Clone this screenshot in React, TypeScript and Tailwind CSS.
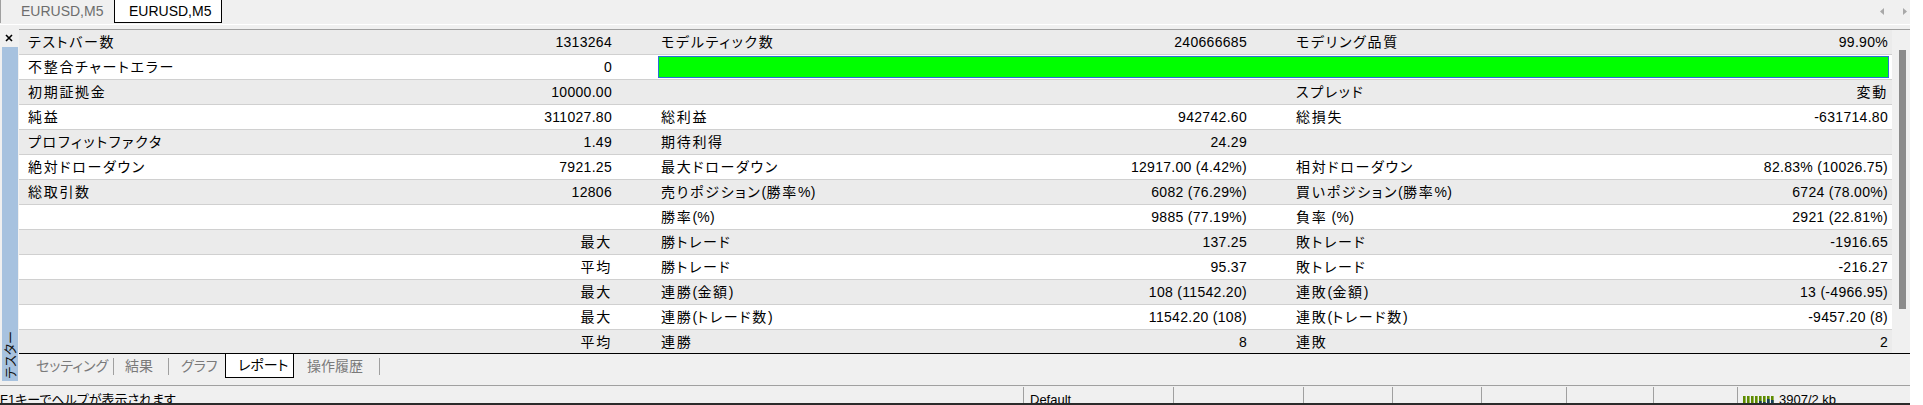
import React from "react";

type Row = { c: [string, string, string, string, string, string]; bar?: boolean };

const data: Row[] = [
  { c: ["テストバー数", "1313264", "モデルティック数", "240666685", "モデリング品質", "99.90%"] },
  { c: ["不整合チャートエラー", "0", "", "", "", ""], bar: true },
  { c: ["初期証拠金", "10000.00", "", "", "スプレッド", "変動"] },
  { c: ["純益", "311027.80", "総利益", "942742.60", "総損失", "-631714.80"] },
  { c: ["プロフィットファクタ", "1.49", "期待利得", "24.29", "", ""] },
  { c: ["絶対ドローダウン", "7921.25", "最大ドローダウン", "12917.00 (4.42%)", "相対ドローダウン", "82.83% (10026.75)"] },
  { c: ["総取引数", "12806", "売りポジション(勝率%)", "6082 (76.29%)", "買いポジション(勝率%)", "6724 (78.00%)"] },
  { c: ["", "", "勝率(%)", "9885 (77.19%)", "負率 (%)", "2921 (22.81%)"] },
  { c: ["", "最大", "勝トレード", "137.25", "敗トレード", "-1916.65"] },
  { c: ["", "平均", "勝トレード", "95.37", "敗トレード", "-216.27"] },
  { c: ["", "最大", "連勝(金額)", "108 (11542.20)", "連敗(金額)", "13 (-4966.95)"] },
  { c: ["", "最大", "連勝(トレード数)", "11542.20 (108)", "連敗(トレード数)", "-9457.20 (8)"] },
  { c: ["", "平均", "連勝", "8", "連敗", "2"] },
];

function T({ s }: { s: string }) {
  const parts = s.split(/([\u3000-\u30ff\u4e00-\u9fff\uff00-\uffef]+)/).filter((p) => p.length > 0);
  return (
    <span>
      {parts.map((p, i) =>
        /[\u3000-\u30ff\u4e00-\u9fff\uff00-\uffef]/.test(p) ? (
          <span key={i} className="tracking-[1.7px]">
            {p}
          </span>
        ) : (
          <span key={i} className="tracking-[0.3px]">
            {p}
          </span>
        )
      )}
    </span>
  );
}

function Sep() {
  return <div className="w-px h-[17px] bg-[#a0a0a0] self-center" />;
}

function StatusSep() {
  return <div className="w-px h-full bg-[#a0a0a0] mt-[1px]" />;
}

export default function App() {
  return (
    <div className="w-[1923px] h-[405px] bg-white overflow-hidden text-[14px] leading-[17px] text-black [font-family:'Liberation_Sans','Noto_Sans_CJK_JP',sans-serif] [font-feature-settings:'palt']">
      <div className="w-[1910px] h-[405px] bg-[#f0f0f0] flex flex-col">
        {/* top tab bar */}
        <div className="h-[24px] flex items-start">
          <div className="h-[23px] w-[114px] border-l border-[#a0a0a0] pl-[20px] flex items-center text-[#6d6d6d]">
            EURUSD,M5
          </div>
          <div className="h-[23px] w-[108px] border-x border-b border-black bg-white pl-[14px] flex items-center">
            EURUSD,M5
          </div>
          <div className="flex-1 h-[22px] flex justify-end items-center gap-[19px] pr-[3px]">
            <svg width="4" height="7" viewBox="0 0 4 7">
              <path d="M4 0 L0 3.5 L4 7 Z" fill="#a8a8a8" />
            </svg>
            <svg width="4" height="7" viewBox="0 0 4 7">
              <path d="M0 0 L4 3.5 L0 7 Z" fill="#a8a8a8" />
            </svg>
          </div>
        </div>
        <div className="h-px bg-white" />
        <div className="h-[4px]" />

        {/* panel */}
        <div className="flex h-[356px]">
          {/* sidebar */}
          <div className="w-[19px] flex flex-col">
            <div className="h-[18px] flex items-center pl-[5px]">
              <svg width="8" height="8" viewBox="0 0 8 8">
                <path d="M1 1 L7 7 M7 1 L1 7" stroke="#000" strokeWidth="1.6" />
              </svg>
            </div>
            <div className="ml-[2px] w-[16px] h-[334px] bg-[#a7c2df] flex flex-col justify-end items-center pb-[2px]">
              <span className="[writing-mode:vertical-rl] [text-orientation:sideways] rotate-180 text-[13px] leading-[15px] text-[#111]">
                テスター
              </span>
            </div>
          </div>

          {/* content */}
          <div className="flex-1 flex flex-col">
            <div className="flex h-[324px] border-t border-[#a0a0a0]">
              <div className="w-[1873px] h-[323px] overflow-hidden">
                {data.map((r, i) => (
                  <div
                    key={i}
                    className={`h-[25px] border-b border-[#d0d0d0] flex items-center whitespace-nowrap ${
                      i % 2 === 0 ? "bg-[#ebebeb]" : "bg-white"
                    }`}
                  >
                    <div className="w-[633px] pl-[9px] pr-[40px] flex justify-between">
                      <T s={r.c[0]} />
                      <T s={r.c[1]} />
                    </div>
                    {r.bar ? (
                      <div className="ml-[6px] mr-[3px] flex-1 h-[22px] border border-[#2a6fd6] bg-[#00ff00]" />
                    ) : (
                      <>
                        <div className="w-[636px] pl-[9px] pr-[41px] flex justify-between">
                          <T s={r.c[2]} />
                          <T s={r.c[3]} />
                        </div>
                        <div className="flex-1 pl-[8px] pr-[4px] flex justify-between">
                          <T s={r.c[4]} />
                          <T s={r.c[5]} />
                        </div>
                      </>
                    )}
                  </div>
                ))}
              </div>
              <div className="flex-1 pt-[20px] pl-[7px]">
                <div className="w-[7px] h-[259px] bg-[#8b8b8b]" />
              </div>
            </div>

            {/* bottom tabs */}
            <div className="h-[25px] border-t border-black flex items-stretch text-[#7a7a7a]">
              <div className="w-[94px] pl-[17px] flex items-center">セッティング</div>
              <Sep />
              <div className="w-[54px] pl-[11px] flex items-center">結果</div>
              <Sep />
              <div className="w-[56px] pl-[12px] flex items-center">グラフ</div>
              <div className="w-[69px] pl-[12px] flex items-center border-x border-b border-black bg-white text-black">
                レポート
              </div>
              <div className="w-[85px] pl-[13px] flex items-center">操作履歴</div>
              <Sep />
            </div>
            <div className="h-[6px]" />
          </div>
        </div>

        {/* status bar */}
        <div className="h-[18px] border-t border-[#a0a0a0] flex overflow-hidden whitespace-nowrap text-[13px]">
          <div className="w-[1023px] pt-[5px]">F1キーでヘルプが表示されます</div>
          <StatusSep />
          <div className="w-[149px] pl-[6px] pt-[5px]">Default</div>
          <StatusSep />
          <div className="w-[129px]" />
          <StatusSep />
          <div className="w-[88px]" />
          <StatusSep />
          <div className="w-[88px]" />
          <StatusSep />
          <div className="w-[84px]" />
          <StatusSep />
          <div className="w-[86px]" />
          <StatusSep />
          <div className="w-[83px]" />
          <StatusSep />
          <div className="flex-1 pl-[5px] pt-[9px] flex items-start gap-[5px]">
            <svg width="31" height="10" viewBox="0 0 31 10" className="mt-[1px]">
              {[0, 1, 2, 3, 4, 5, 6, 7].map((k) => (
                <rect key={"g" + k} x={k * 4} y={0} width={2.6} height={10} fill="#5e8c00" />
              ))}
              {[
                [3, 7],
                [4, 5],
                [5, 6],
                [6, 3],
                [7, 4],
              ].map(([k, y]) => (
                <rect key={"b" + k} x={k * 4} y={y} width={2.6} height={10 - y} fill="#173f5c" />
              ))}
            </svg>
            <span className="-mt-[4px]">3907/2 kb</span>
          </div>
        </div>
        <div className="h-[2px] bg-[#2b2b2b]" />
      </div>
    </div>
  );
}
